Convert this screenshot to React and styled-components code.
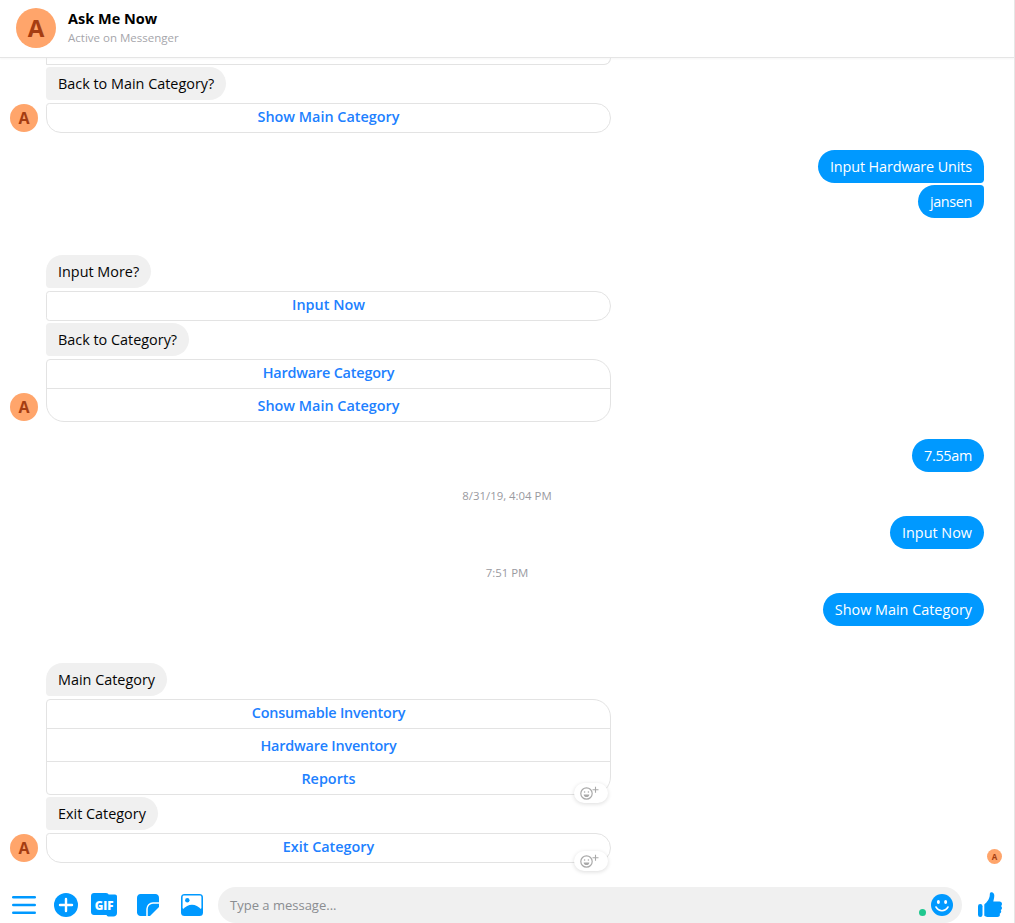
import React from "react";
import styled, { createGlobalStyle } from "styled-components";

const Global = createGlobalStyle`
  html, body { margin: 0; padding: 0; background: #fff; }
  body { font-family: "Open Sans", "Noto Sans", "Liberation Sans", sans-serif; }
`;

const Page = styled.div`
  width: 1015px; height: 923px; box-sizing: border-box; display: flex; flex-direction: column;
  position: relative; overflow: hidden; border-right: 1px solid #e6e6e6;
`;
const Header = styled.header`
  height: 58px; flex: none; box-sizing: border-box; display: flex; align-items: center; gap: 12px;
  padding: 0 0 2px 16px; border-bottom: 1px solid #e5e5e5; box-shadow: 0 1px 2px rgba(0,0,0,.04);
`;
const Avatar = styled.div`
  width: ${p => p.$size}px; height: ${p => p.$size}px; border-radius: 50%; flex: none; background: #ffa56b;
  color: #a53d12; font: 700 ${p => p.$font}px/${p => p.$size}px "Open Sans", sans-serif; text-align: center;
`;
const Titles = styled.div`display: flex; flex-direction: column; gap: 2px;`;
const Title = styled.div`font-size: 14.5px; font-weight: 700; line-height: 19px; color: #000;`;
const Sub = styled.div`font-size: 11.5px; line-height: 16px; color: #a6a6ab;`;

const List = styled.main`flex: 1; min-height: 0; display: flex; flex-direction: column; overflow: hidden;`;
const Group = styled.section`
  display: flex; align-items: flex-end; gap: 8px; padding-left: 10px; margin-top: ${p => p.$top || 0}px;
`;
const AvatarSlot = styled.div`width: 28px; flex: none; display: flex;`;
const Stack = styled.div`display: flex; flex-direction: column; align-items: flex-start; gap: 3px; width: 565px;`;
const Bubble = styled.div`
  height: 33px; box-sizing: border-box; padding: 0 12px; background: #f0f0f0; color: #050505;
  font-size: 14.4px; line-height: 33px; white-space: nowrap;
  border-radius: ${p => p.$first ? "18px" : "4px"} 18px 18px 4px;
`;
const Card = styled.div`
  position: relative; width: 100%; box-sizing: border-box; border: 1px solid #e3e3e3; background: #fff;
  margin-bottom: -1px;
  border-radius: 4px 18px 18px ${p => p.$tail ? "18px" : "4px"};
`;
const CutCard = styled.div`
  height: 7px; width: 100%; box-sizing: border-box; border: 1px solid #e3e3e3; border-top: 0; margin-bottom: -1px;
  border-radius: 0 0 18px 4px;
`;
const Action = styled.div`
  height: ${p => p.$row ? 33 : 28}px; box-sizing: border-box; text-align: center; color: #2080ff; font-size: 14.4px; font-weight: 600;
  line-height: ${p => p.$row ? 34 : 26}px; letter-spacing: ${p => p.$ls || 0}px;
  & + & { border-top: 1px solid #e3e3e3; }
`;
const Reaction = styled.div`
  position: absolute; right: 2px; bottom: -9px; width: 34px; height: 20px; border-radius: 10px; background: #fff;
  box-shadow: 0 1px 4px rgba(0,0,0,.14); display: flex; align-items: center; justify-content: center;
`;
const Outgoing = styled.section`
  display: flex; flex-direction: column; align-items: flex-end; gap: 2px; padding-right: 30px;
  margin-top: ${p => p.$top || 0}px;
`;
const Out = styled.div`
  height: 33px; box-sizing: border-box; padding: 0 12px; background: #0099ff; color: #fff; font-size: 14.4px;
  line-height: 33px; white-space: nowrap; letter-spacing: ${p => p.$ls || 0}px;
  border-radius: 18px ${p => p.$cont ? "4px" : "18px"} ${p => p.$more ? "4px" : "18px"} 18px;
`;
const Stamp = styled.div`
  margin-top: ${p => p.$top}px; height: 16px; text-align: center; font-size: 11.4px; line-height: 18px; color: #9a9a9f;
`;
const Seen = styled.div`position: absolute; left: 987px; top: 849px;`;

const Composer = styled.footer`
  flex: none; height: 36px; display: flex; align-items: center; padding: 0 0 0 12px;
`;
const Tools = styled.div`display: flex; align-items: center; width: 206px; flex: none; height: 100%;`;
const Tool = styled.div`
  width: ${p => p.$w}px; display: flex; margin-left: ${p => p.$gap || 0}px;
`;
const Input = styled.div`
  width: 744px; height: 36px; flex: none; box-sizing: border-box; border-radius: 18px; background: #f0f0f0;
  display: flex; align-items: center; padding: 0 9px 0 12px; gap: 5px;
`;
const Placeholder = styled.div`flex: 1; font-size: 13px; color: #8a8d91;`;
const Dot = styled.div`width: 7px; height: 7px; border-radius: 50%; background: #1fc78f; align-self: flex-end; margin-bottom: 7px;`;
const Like = styled.div`margin-left: 16px; display: flex;`;

const SmileyGray = () => (
  <svg width="22" height="14" viewBox="0 0 22 14" fill="none" stroke="#a9a9a9">
    <circle cx="6.5" cy="7.5" r="5.7" strokeWidth="1.2" />
    <circle cx="4.6" cy="6" r=".8" fill="#a9a9a9" stroke="none" />
    <circle cx="8.4" cy="6" r=".8" fill="#a9a9a9" stroke="none" />
    <path d="M3.6 8.4h5.800c-.3 1.800-1.400 2.600-2.900 2.600s-2.600-.8-2.900-2.600z" fill="#a9a9a9" stroke="none" />
    <path d="M15.5 .8v6M12.500 3.800h6" strokeWidth="1.100" />
  </svg>
);
const Menu = () => (
  <svg width="24" height="18" viewBox="0 0 24 18" fill="#0099ff">
    <rect y="0" width="24" height="2.600" rx="1.300" /><rect y="7.700" width="24" height="2.600" rx="1.300" /><rect y="15.400" width="24" height="2.600" rx="1.300" />
  </svg>
);
const Plus = () => (
  <svg width="24" height="24" viewBox="0 0 24 24">
    <circle cx="12" cy="12" r="12" fill="#0099ff" />
    <path d="M12 6v12M6 12h12" stroke="#fff" strokeWidth="2.400" strokeLinecap="round" />
  </svg>
);
const Gif = () => (
  <svg width="26" height="24" viewBox="0 0 26 24">
    <path d="M3 0h12c1.500 0 2.400.8 2.600 1.400H24c1.200 0 2 .8 2 2V20c0 2-1.500 3.500-3.500 3.500H18c-1 0-2-.5-2.500-1.500H3c-1.700 0-3-1.300-3-3V3c0-1.700 1.300-3 3-3z" fill="#0099ff" />
    <text x="13" y="16.500" textAnchor="middle" fontFamily="Open Sans, sans-serif" fontWeight="800" fontSize="11.500" fill="#fff">GIF</text>
  </svg>
);
const Sticker = () => (
  <svg width="22" height="22" viewBox="0 0 22 22">
    <path d="M3.500 0h15C20.400 0 22 1.600 22 3.500V13l-9 9H3.500C1.600 22 0 20.400 0 18.500v-15C0 1.600 1.600 0 3.500 0z" fill="#0099ff" />
    <path d="M10 22v-7c0-3.300 2.700-6 6-6h6" fill="none" stroke="#fff" strokeWidth="1.500" />
  </svg>
);
const Picture = () => (
  <svg width="22" height="22" viewBox="0 0 22 22">
    <rect width="22" height="22" rx="3.500" fill="#0099ff" />
    <rect x="1.600" y="1.600" width="18.800" height="13.600" rx="1.400" fill="#fff" />
    <circle cx="6.300" cy="6.200" r="2.200" fill="#0099ff" />
    <path d="M1.600 15.500c3-3 6-4.800 9.400-4.800s6.400 1.800 9.400 4.800V20H1.600z" fill="#0099ff" />
  </svg>
);
const Smiley = () => (
  <svg width="22" height="22" viewBox="0 0 22 22">
    <circle cx="11" cy="11" r="11" fill="#0099ff" />
    <ellipse cx="7.400" cy="8" rx="1.500" ry="2" fill="#fff" />
    <ellipse cx="14.600" cy="8" rx="1.500" ry="2" fill="#fff" />
    <path d="M5 13c1.500 2.500 3.600 3.700 6 3.700s4.500-1.200 6-3.700" fill="none" stroke="#fff" strokeWidth="1.600" strokeLinecap="round" />
  </svg>
);
const Thumb = () => (
  <svg width="24" height="26" viewBox="0 0 24 26" fill="#0099ff">
    <rect x="0" y="12" width="4.500" height="13" rx="2.200" />
    <path d="M12.500.5c2-.8 3.800.6 3.800 3 0 2.300-.7 4.200-1 6h6.200c1.600 0 2.500 1.100 2.500 2.400 0 .9-.4 1.600-1 2 .7.500 1 1.200 1 2 0 1-.6 1.800-1.300 2.200.3.400.5 1 .5 1.500 0 1-.6 1.800-1.500 2.200.1.300.2.600.2 1 0 1.400-1.100 2.200-2.500 2.200H11c-2.500 0-4.700-1-4.700-1.600V12.400c2.600-2 5.300-5.500 5.500-9.400 0-1 .1-2 .7-2.500z" />
  </svg>
);

const Agent = ({ children, top }) => (
  <Group $top={top}>
    <AvatarSlot><Avatar $size={28} $font={16}>A</Avatar></AvatarSlot>
    <Stack>{children}</Stack>
  </Group>
);

export default function App() {
  return (
    <Page>
      <Global />
      <Header>
        <Avatar $size={40} $font={24}>A</Avatar>
        <Titles>
          <Title>Ask Me Now</Title>
          <Sub>Active on Messenger</Sub>
        </Titles>
      </Header>
      <List>
        <Agent>
          <CutCard />
          <Bubble>Back to Main Category?</Bubble>
          <Card $tail><Action>Show Main Category</Action></Card>
        </Agent>
        <Outgoing $top={18}>
          <Out $more $ls={-0.12}>Input Hardware Units</Out>
          <Out $cont $ls={-0.35}>jansen</Out>
        </Outgoing>
        <Agent top={37}>
          <Bubble $first>Input More?</Bubble>
          <Card><Action>Input Now</Action></Card>
          <Bubble>Back to Category?</Bubble>
          <Card $tail>
            <Action $ls={-0.18}>Hardware Category</Action>
            <Action $row>Show Main Category</Action>
          </Card>
        </Agent>
        <Outgoing $top={18}><Out $ls={-0.3}>7.55am</Out></Outgoing>
        <Stamp $top={15}>8/31/19, 4:04 PM</Stamp>
        <Outgoing $top={13}><Out>Input Now</Out></Outgoing>
        <Stamp $top={15}>7:51 PM</Stamp>
        <Outgoing $top={13}><Out>Show Main Category</Out></Outgoing>
        <Agent top={37}>
          <Bubble $first>Main Category</Bubble>
          <Card>
            <Action $ls={-0.2}>Consumable Inventory</Action>
            <Action $row $ls={-0.2}>Hardware Inventory</Action>
            <Action $row>Reports</Action>
            <Reaction><SmileyGray /></Reaction>
          </Card>
          <Bubble>Exit Category</Bubble>
          <Card $tail>
            <Action>Exit Category</Action>
            <Reaction><SmileyGray /></Reaction>
          </Card>
        </Agent>
      </List>
      <Seen><Avatar $size={15} $font={8}>A</Avatar></Seen>
      <Composer>
        <Tools>
          <Tool $w={24}><Menu /></Tool>
          <Tool $w={24} $gap={18}><Plus /></Tool>
          <Tool $w={26} $gap={13}><Gif /></Tool>
          <Tool $w={22} $gap={20}><Sticker /></Tool>
          <Tool $w={22} $gap={22}><Picture /></Tool>
        </Tools>
        <Input>
          <Placeholder>Type a message...</Placeholder>
          <Dot />
          <Smiley />
        </Input>
        <Like><Thumb /></Like>
      </Composer>
    </Page>
  );
}
